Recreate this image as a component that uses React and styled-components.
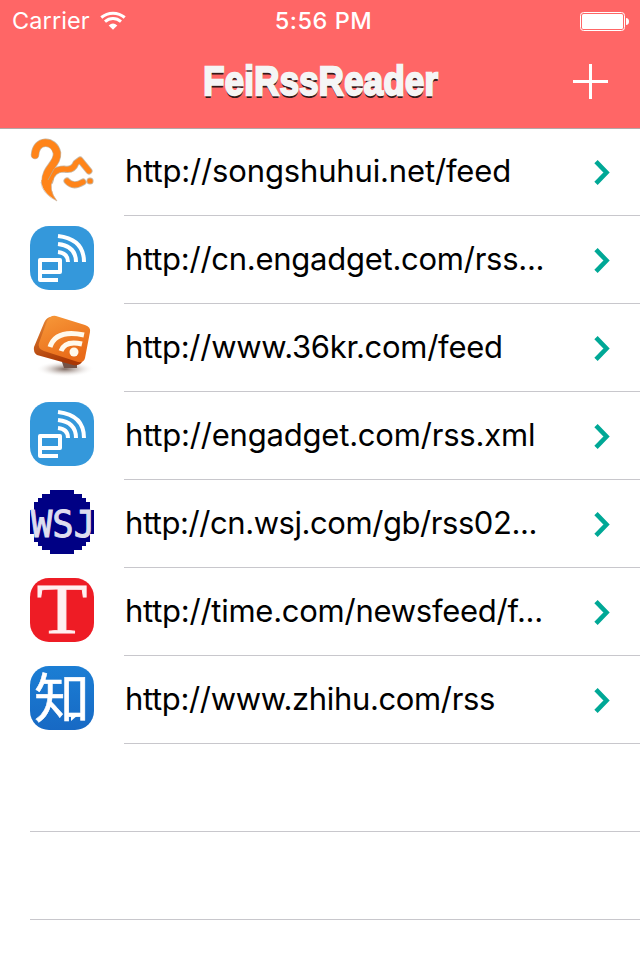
import React from "react";
import styled, { createGlobalStyle } from "styled-components";

const GlobalStyle = createGlobalStyle`
  * { box-sizing: border-box; }
  body { margin: 0; background: #fff; }
`;

const Screen = styled.div`
  width: 640px;
  height: 960px;
  overflow: hidden;
  background: #fff;
  color: #000;
  font-family: Inter, "Liberation Sans", sans-serif;
`;

const Header = styled.header`
  height: 129px;
  background: #ff6666;
  border-bottom: 1px solid #b2a8a8;
  color: #fff;
`;

const StatusBar = styled.div`
  display: grid;
  grid-template-columns: 1fr auto 1fr;
  align-items: center;
  height: 40px;
  padding: 0 11px 0 12px;
`;

const Carrier = styled.div`
  display: flex;
  align-items: center;
  gap: 10px;
  font-size: 23.5px;
  line-height: 40px;
  letter-spacing: 0.1px;
  padding-top: 1px;
`;

const Clock = styled.div`
  font-size: 23.5px;
  font-weight: 500;
  line-height: 40px;
  letter-spacing: 0.55px;
  padding: 1px 0 0 6px;
`;

const BatterySlot = styled.div`
  display: flex;
  justify-content: flex-end;
  padding-top: 1px;
`;

const NavBar = styled.div`
  display: grid;
  grid-template-columns: 67px 1fr 67px;
  align-items: center;
  height: 88px;
  padding-bottom: 5px;
`;

const Title = styled.h1`
  margin: 0;
  justify-self: center;
  font-family: "Liberation Sans", sans-serif;
  font-size: 41.5px;
  font-weight: 700;
  line-height: 48px;
  letter-spacing: 0.4px;
  color: #f5f5f5;
  -webkit-text-stroke: 2.3px #f5f5f5;
  text-shadow: 0 1px 0 #331818, 0 2px 0 #331818, 0 3px 0 #331818;
  transform: translate(1px, -1px) scaleX(0.835);
`;

const AddButton = styled.button`
  display: flex;
  padding: 0;
  border: 0;
  background: none;
  color: #fff;
`;

const FeedList = styled.ul`
  margin: 0;
  padding: 0 0 0 30px;
  list-style: none;
`;

const Row = styled.li`
  display: flex;
  height: 88px;
  &:first-child { height: 87px; }
  &:first-child > svg { margin-top: 9px; }
  > svg { flex: none; margin-top: 10px; overflow: visible; }
`;

const RowBody = styled.div`
  display: flex;
  flex: 1;
  align-items: center;
  justify-content: space-between;
  min-width: 0;
  margin-left: 30px;
  padding: 1px 30px 0 1px;
  border-bottom: 1px solid #c8c7cc;
`;

const FeedUrl = styled.span`
  padding-bottom: 3px;
  font-size: 31px;
  line-height: 40px;
  letter-spacing: ${(p) => p.$tracking}px;
  white-space: nowrap;
`;

const EmptyRow = styled.li`
  height: 88px;
  border-bottom: 1px solid #c8c7cc;
`;

const Wifi = () => (
  <svg width="26" height="20" viewBox="0 0 26 20" fill="none" stroke="#fff">
    <path d="M1.3 6.5C8 .7 18 .7 24.7 6.5" strokeWidth="3" />
    <path d="M5 10.6C9.7 6.5 16.3 6.5 21 10.6" strokeWidth="3" />
    <path d="M8.7 14.4Q13 10.6 17.3 14.4L13 18.8Z" fill="#fff" stroke="none" />
  </svg>
);

const Battery = () => (
  <svg width="49" height="19" viewBox="0 0 49 19">
    <rect x=".5" y=".5" width="44" height="18" rx="3" fill="none" stroke="#fff" />
    <rect x="2" y="2" width="41" height="15" rx="1.5" fill="#fff" />
    <path d="M46 6q3 .4 3 3.5t-3 3.5z" fill="#fff" />
  </svg>
);

const Plus = () => (
  <svg width="35" height="35" viewBox="0 0 35 35" stroke="currentColor" strokeWidth="3">
    <path d="M17.5 0v35M0 17.5h35" />
  </svg>
);

const Chevron = () => (
  <svg width="16" height="27" viewBox="0 0 16 27" fill="none" stroke="#00a896" strokeWidth="4.600">
    <path d="M2 2.700L12.500 13.500L2 24.300" />
  </svg>
);

const Squirrel = () => (
  <svg width="64" height="64" viewBox="0 0 64 64" fill="none">
    <g stroke="#c8b8a6" strokeLinecap="round" strokeLinejoin="round">
      <path d="M5 17C6 1 24 1 27 15C28 26 15 30 15.500 44" strokeWidth="8.500" />
      <path d="M20 43Q22 31 34 31Q43 33 46 25L50 22L59 33" strokeWidth="7" />
      <path d="M37 43Q43 50 53 44M60 43h.1" strokeWidth="7" />
    </g>
    <g stroke="#ff8419" strokeLinecap="round" strokeLinejoin="round">
      <path d="M5 17C6 1 24 1 27 15C28 26 15 30 15.500 44" strokeWidth="7" />
      <path d="M20 43Q22 31 34 31Q43 33 46 25L50 22L59 33" strokeWidth="5.300" />
      <path d="M37 43Q43 50 53 44M60 43h.1" strokeWidth="5.200" />
    </g>
    <path d="M11.500 42Q11 54 27 63Q18 51 23 40Z" fill="#ff8419" />
    <path d="M11 44Q12 56 27 63Q18 52 23 42" stroke="#c8b8a6" strokeWidth=".7" />
    <path d="M18 42L24 31" stroke="#c9a47d" strokeWidth="1" />
  </svg>
);

const Engadget = () => (
  <svg width="64" height="64" viewBox="0 0 64 64" fill="none" stroke="#fff">
    <rect width="64" height="64" rx="19" fill="#3498db" stroke="none" />
    <path d="M10 46H30V34H10V54H28" strokeWidth="4" strokeLinejoin="round" />
    <path d="M28 26Q38 27 38 36M28 18Q46 20 46 36M28 10Q54 13 54 36" strokeWidth="4" />
  </svg>
);

const Kr36 = () => (
  <svg width="64" height="64" viewBox="0 0 64 64">
    <defs>
      <linearGradient id="krFace" x1="0" y1="0" x2=".5" y2="1">
        <stop offset="0" stopColor="#f79a3a" />
        <stop offset="1" stopColor="#e96a18" />
      </linearGradient>
      <linearGradient id="krSide" x1="0" y1="0" x2=".3" y2="1">
        <stop offset="0" stopColor="#e98a37" />
        <stop offset="1" stopColor="#a93705" />
      </linearGradient>
      <radialGradient id="krShade">
        <stop offset="0" stopColor="#806b62" />
        <stop offset=".45" stopColor="#c9c0bc" stopOpacity=".8" />
        <stop offset="1" stopColor="#fff" stopOpacity="0" />
      </radialGradient>
    </defs>
    <ellipse cx="35" cy="55" rx="29" ry="8" fill="url(#krShade)" />
    <path d="M32 48h15v6H34z" fill="#735247" />
    <path d="M20 3Q16 4 14 9L4 33Q3 38 7 41L43 51Q49 52 52 48L58 25Z" fill="url(#krSide)" />
    <path d="M17 7Q20 1 26 2L55 11Q61 13 60 18L55 44Q54 49 48 48L14 37Q7 34 9 29Z" fill="url(#krFace)" />
    <g fill="none" stroke="#fff9ec" strokeWidth="5">
      <path d="M20 33Q26 15 54 21" />
      <path d="M31 37Q35 26 52 30" />
    </g>
    <circle cx="44" cy="38" r="4.500" fill="#fff9ec" />
  </svg>
);

const LogoText = styled.text`
  font-family: ${(p) => p.$family};
  font-size: ${(p) => p.$size}px;
`;

const Wsj = () => (
  <svg width="64" height="64" viewBox="0 0 64 64">
    <path d="M20 0H44V4H52V8H56V12H60V20H64V44H60V52H56V56H52V60H44V64H20V60H12V56H8V52H4V44H0V20H4V12H8V8H12V4H20Z" fill="#000084" />
    <LogoText $family='"DejaVu Sans Mono", monospace' $size={37} x="1" y="47" textLength="64" lengthAdjust="spacingAndGlyphs" fill="#dedeef" stroke="#dedeef" strokeWidth="1">WSJ</LogoText>
  </svg>
);

const Time = () => (
  <svg width="64" height="64" viewBox="0 0 64 64">
    <rect width="64" height="64" rx="19" fill="#ee1c25" />
    <LogoText $family='"Liberation Serif", serif' $size={71} x="6.5" y="55" textLength="51" lengthAdjust="spacingAndGlyphs" fill="#fff0f0" stroke="#fff0f0" strokeWidth=".8">T</LogoText>
  </svg>
);

const Zhihu = () => (
  <svg width="64" height="64" viewBox="0 0 64 64">
    <defs>
      <linearGradient id="zhihuBlue" x1="0" y1="0" x2="0" y2="1">
        <stop offset="0" stopColor="#1b7ed4" />
        <stop offset="1" stopColor="#1769c4" />
      </linearGradient>
    </defs>
    <rect width="64" height="64" rx="19" fill="url(#zhihuBlue)" />
    <LogoText $family='"Noto Sans CJK SC", sans-serif' $size={53} x="4" y="51.5" textLength="56" lengthAdjust="spacingAndGlyphs" fill="#fff" stroke="#fff" strokeWidth=".5">知</LogoText>
    <path d="M41 48V55L48 49" fill="#fff" />
  </svg>
);

const feeds = [
  { url: "http://songshuhui.net/feed", Icon: Squirrel, tracking: -0.15 },
  { url: "http://cn.engadget.com/rss...", Icon: Engadget, tracking: -0.26 },
  { url: "http://www.36kr.com/feed", Icon: Kr36, tracking: -0.28 },
  { url: "http://engadget.com/rss.xml", Icon: Engadget, tracking: -0.2 },
  { url: "http://cn.wsj.com/gb/rss02...", Icon: Wsj, tracking: -0.44 },
  { url: "http://time.com/newsfeed/f...", Icon: Time, tracking: -0.26 },
  { url: "http://www.zhihu.com/rss", Icon: Zhihu, tracking: -0.35 },
];

export default function App() {
  return (
    <Screen>
      <GlobalStyle />
      <Header>
        <StatusBar>
          <Carrier>Carrier<Wifi /></Carrier>
          <Clock>5:56 PM</Clock>
          <BatterySlot><Battery /></BatterySlot>
        </StatusBar>
        <NavBar>
          <span />
          <Title>FeiRssReader</Title>
          <AddButton aria-label="Add feed"><Plus /></AddButton>
        </NavBar>
      </Header>
      <FeedList>
        {feeds.map(({ url, Icon, tracking }) => (
          <Row key={url}>
            <Icon />
            <RowBody>
              <FeedUrl $tracking={tracking}>{url}</FeedUrl>
              <Chevron />
            </RowBody>
          </Row>
        ))}
        <EmptyRow />
        <EmptyRow />
      </FeedList>
    </Screen>
  );
}
